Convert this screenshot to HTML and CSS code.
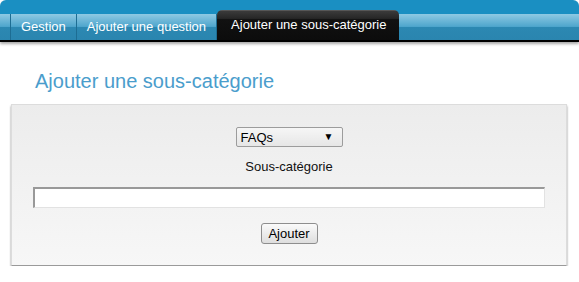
FILE: index.html
```html
<!DOCTYPE html>
<html lang="fr">
    <head>
        <meta charset="UTF-8">
        <meta name="viewport" content="width=device-width, initial-scale=1.0">
        <title>Ajouter une sous-catégorie</title>
        <link rel="stylesheet" href="styles.css">
    </head>
    <body>
        <div class="header">
            <ul class="tabs">
                <li class="tab-spacer"></li>
                <li class="tab">Gestion</li>
                <li class="tab">Ajouter une question</li>
                <li class="tab active">Ajouter une sous-catégorie</li>
            </ul>
        </div>

        <div class="content">
            <h1 class="page-title">Ajouter une sous-catégorie</h1>
            <form class="panel" id="subcatForm">
                <div class="select-wrap">
                    <select id="category">
                        <option>FAQs</option>
                    </select>
                </div>
                <label for="subcat">Sous-catégorie</label>
                <input type="text" id="subcat">
                <button type="submit">Ajouter</button>
            </form>
        </div>
    </body>
</html>
```

FILE: styles.css
```css
* {
    margin: 0;
    padding: 0;
    box-sizing: border-box;
    font-family: 'Liberation Sans', Arial, sans-serif;
}

body {
    background: #fff;
    color: #111;
    font-size: 13px;
}

.header {
    background: #1a8fc2;
    border-radius: 6px 6px 0 0;
    padding-top: 14px;
    border-bottom: 2px solid #000;
    box-shadow: 0 2px 3px rgba(0, 0, 0, 0.35);
}

.tabs {
    list-style: none;
    display: flex;
    align-items: flex-end;
    height: 26px;
    background: linear-gradient(#8ec9e3 0, #4fa6cd 48%, #2c88b2 50%, #2a85af 100%);
}

.tab-spacer {
    width: 11px;
    height: 26px;
    border-right: 1px solid #1d6d93;
}

.tab {
    height: 26px;
    line-height: 26px;
    padding: 0 10px;
    color: #fff;
    border-right: 1px solid #1d6d93;
    cursor: pointer;
}

.tab.active {
    height: 30px;
    line-height: 29px;
    padding: 0 13px 0 14px;
    border: none;
    border-radius: 5px 5px 0 0;
    background: linear-gradient(#6a6a6a 0, #3a3a3a 4%, #262626 28%, #111 32%, #0c0c0c 100%);
}

.content {
    padding: 28px 12px 0 11px;
}

.page-title {
    font-size: 20px;
    font-weight: normal;
    line-height: 23px;
    color: #4a9dcc;
    padding-left: 24px;
    margin-bottom: 11px;
}

.panel {
    display: flex;
    flex-direction: column;
    align-items: center;
    border: 1px solid #dcdcdc;
    border-bottom-color: #9a9a9a;
    background: linear-gradient(#ececec, #f7f7f7);
    padding: 22px 0 21px;
    box-shadow: 0 2px 2px rgba(0, 0, 0, 0.45);
}

.select-wrap {
    position: relative;
    width: 107px;
    height: 20px;
}

.select-wrap::after {
    content: "▼";
    position: absolute;
    right: 9px;
    top: 4px;
    font-size: 10px;
    color: #000;
    pointer-events: none;
}

select {
    appearance: none;
    -webkit-appearance: none;
    width: 100%;
    height: 100%;
    border: 1px solid #9c9c9c;
    border-radius: 2px;
    background: linear-gradient(#f6f6f6, #e6e6e6);
    padding-left: 4px;
    font-size: 13px;
    color: #000;
}

label {
    display: block;
    line-height: 15px;
    margin-top: 12px;
    color: #111;
}

input[type="text"] {
    display: block;
    width: 512px;
    height: 21px;
    margin-top: 13px;
    background: #fff;
    border: 1px solid #e2e2e2;
    border-top: 2px solid #999;
    border-left: 2px solid #999;
    font-size: 13px;
}

button {
    margin-top: 15px;
    width: 57px;
    height: 21px;
    border: 1px solid #8e8e8e;
    border-radius: 3px;
    background: linear-gradient(#fafafa, #dedede);
    font-size: 13px;
    color: #000;
    cursor: pointer;
}
```
